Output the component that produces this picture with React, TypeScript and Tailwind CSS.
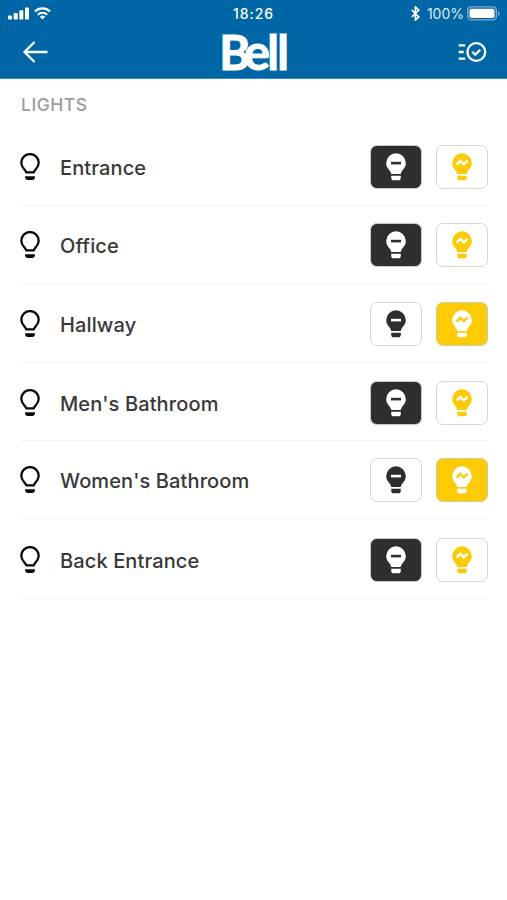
import React from "react";

type Light = { name: string; on: boolean; row: string };

const lights: Light[] = [
  { name: "Entrance", on: false, row: "h-[78px]" },
  { name: "Office", on: false, row: "h-[78px]" },
  { name: "Hallway", on: true, row: "h-[79px] pt-[2px]" },
  { name: "Men's Bathroom", on: false, row: "h-[78px] pt-[2px]" },
  { name: "Women's Bathroom", on: true, row: "h-[78px] pt-[1px]" },
  { name: "Back Entrance", on: false, row: "h-[80px] pt-[2px]" },
];

function BulbOutline() {
  return (
    <svg className="h-[28px] w-[20px] shrink-0" viewBox="0 0 20 28" fill="none">
      <path
        d="M6.200 19.300C5.500 16.400 1.300 15 1.300 9.800a8.700 8.700 0 0 1 17.400 0c0 5.200-4.200 6.600-4.900 9.500z"
        stroke="#080808"
        strokeWidth="2.300"
        strokeLinejoin="round"
      />
      <path d="M5.100 23.300h9.800v1.200q0 2.400-2.400 2.400H7.500q-2.400 0-2.400-2.400z" fill="#080808" />
    </svg>
  );
}

function Bulb({ kind, color, mark }: { kind: "off" | "on"; color: string; mark: string }) {
  return (
    <svg className="h-[28px] w-[20px]" viewBox="0 0 20 28" fill="none">
      <path
        d="M10 .3a9.800 9.800 0 0 1 9.800 9.800c0 4.200-2.600 6.200-4 8.200-.7 1-.5 2.800-1.500 2.800H5.700c-1 0-.8-1.800-1.500-2.800C2.800 16.300.2 14.300.2 10.100A9.800 9.800 0 0 1 10 .3z"
        fill={color}
      />
      <path d="M5.200 22.700h9.600v1.700q0 2.900-2.600 2.900H7.800q-2.600 0-2.600-2.900z" fill={color} />
      {kind === "off" ? (
        <path d="M5 10.100h10" stroke={mark} strokeWidth="2.600" />
      ) : (
        <path d="M4.600 11.500 8.400 8l3.400 3.300 3.700-3.600" stroke={mark} strokeWidth="2.400" />
      )}
    </svg>
  );
}

function LightRow({ name, on, row }: Light) {
  return (
    <li className={`flex items-center border-b border-[#f4f4f4] ${row}`}>
      <BulbOutline />
      <span className="ml-[20px] flex-1 pt-[2px] text-[20px] font-medium leading-6 tracking-[0.120px] text-[#383838]">{name}</span>
      <button
        className={`flex h-[44px] w-[52px] items-center justify-center rounded-[7px] border ${
          on ? "border-[#d6d6d6] bg-white" : "border-[#c9c9c9] bg-[#2e2e2e]"
        }`}
      >
        <Bulb kind="off" color={on ? "#2e2e2e" : "#fff"} mark={on ? "#fff" : "#2e2e2e"} />
      </button>
      <button
        className={`ml-[14px] flex h-[44px] w-[52px] items-center justify-center rounded-[7px] border ${
          on ? "border-[#d3cba8] bg-[#fdcb05]" : "border-[#d6d6d6] bg-white"
        }`}
      >
        <Bulb kind="on" color={on ? "#fff" : "#fdcb05"} mark={on ? "#fdcb05" : "#fff"} />
      </button>
    </li>
  );
}

function StatusBar() {
  return (
    <div className="grid h-[27px] grid-cols-3 items-center px-[8px] text-white">
      <div className="flex items-center gap-[5px]">
        <svg className="h-[13px] w-[21px]" viewBox="0 0 21 13" fill="currentColor">
          <rect x="0" y="8.500" width="4" height="4" rx=".8" />
          <rect x="5.700" y="6" width="4" height="6.500" rx=".8" />
          <rect x="11.300" y="3.300" width="4" height="9.200" rx=".8" />
          <rect x="17" y=".5" width="4" height="12" rx=".8" />
        </svg>
        <svg className="h-[13px] w-[17px]" viewBox="0 0 17 13" fill="none" stroke="currentColor">
          <path d="M1 4.500a10.600 10.600 0 0 1 15 0" strokeWidth="2.300" />
          <path d="M3.800 7.700a6.700 6.700 0 0 1 9.400 0" strokeWidth="2.200" />
          <path d="m5.800 9.700 2.700 2.900 2.700-2.900a3.900 3.900 0 0 0-5.400 0z" fill="currentColor" stroke="none" />
        </svg>
      </div>
      <span className="text-center text-[14px] font-medium tracking-[0.900px]">18:26</span>
      <div className="flex items-center justify-end">
        <svg className="mr-[7px] h-[15px] w-[9px]" viewBox="0 0 9 15" fill="none" stroke="currentColor" strokeWidth="1.700">
          <path d="m.8 4 7 7-3.400 3V1l3.400 3-7 7" />
        </svg>
        <span className="mr-[3px] text-[14px] text-[#dcebf5]">100%</span>
        <svg className="-mr-px h-[15px] w-[33px]" viewBox="0 0 33 15">
          <rect x=".7" y=".9" width="28.600" height="13" rx="3.500" fill="none" stroke="#7caed2" strokeWidth="1.400" />
          <rect x="2.500" y="2.800" width="25" height="9.200" rx="1.800" fill="#fff" />
          <path d="M31 5v5q1.600-.7 1.600-2.500T31 5z" fill="#7caed2" />
        </svg>
      </div>
    </div>
  );
}

function BellLogo() {
  return (
    <svg
      className="h-[51px] w-[80px] justify-self-center overflow-visible"
      viewBox="-6 -5.500 80 51"
      fill="currentColor"
      stroke="currentColor"
      strokeWidth="1"
      fontFamily="Lato, sans-serif"
      fontWeight="700"
      fontSize="47"
    >
      <text y="37">
        <tspan x="-1.800">B</tspan>
        <tspan x="23" fontSize="49">e</tspan>
        <tspan x="46.200">l</tspan>
        <tspan x="56.300">l</tspan>
      </text>
    </svg>
  );
}

export default function App() {
  return (
    <div className="h-[900px] w-[507px] overflow-hidden bg-white font-['Inter',sans-serif]">
      <header className="h-[79px] border-b border-[#3c8abd] bg-[#0066a6]">
        <StatusBar />
        <div className="grid h-[51px] grid-cols-3 items-center pl-[22px] pr-[20px] text-white">
          <svg className="-mt-px h-[22px] w-[26px]" viewBox="0 0 26 22" fill="none" stroke="currentColor" strokeWidth="2.300">
            <path d="M12.500 1 2.500 11l10 10M2.500 11H25.500" />
          </svg>
          <BellLogo />
          <svg className="-mt-px h-[22px] w-[29px] justify-self-end" viewBox="0 0 29 22" fill="none" stroke="currentColor" strokeWidth="2.300">
            <circle cx="18.300" cy="11" r="8.900" />
            <path d="m14.300 10.800 2.900 2.900 5-5M.7 4.300h6.500M.7 11h5M.7 17.700h6.500" />
          </svg>
        </div>
      </header>
      <main className="pl-[20px] pr-[19px]">
        <h2 className="flex h-[49px] items-center pl-[1px] pt-[3px] text-[17.500px] font-medium tracking-[0.500px] text-[#9b9b9b]">LIGHTS</h2>
        <ul>
          {lights.map((light) => (
            <LightRow key={light.name} {...light} />
          ))}
        </ul>
      </main>
    </div>
  );
}
